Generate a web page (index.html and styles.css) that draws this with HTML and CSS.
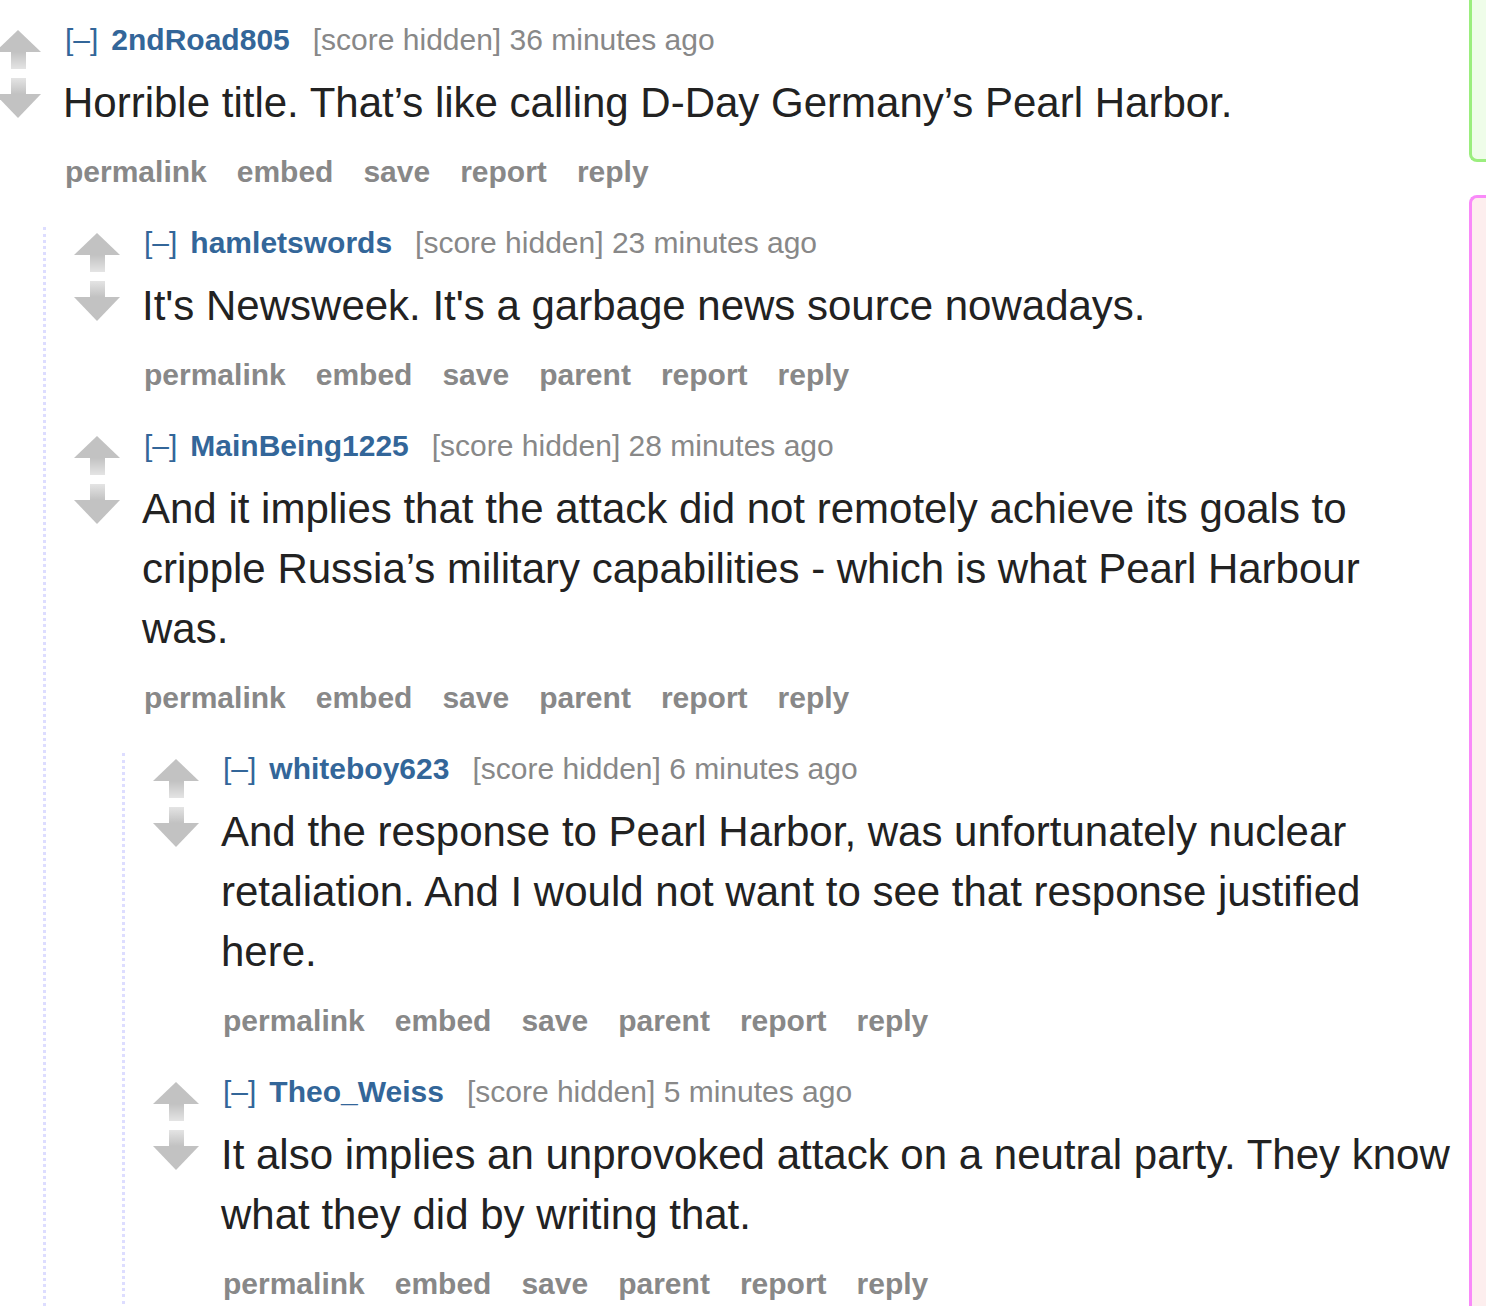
FILE: index.html
```html
<!DOCTYPE html>
<html lang="en">
<head>
    <meta charset="UTF-8">
    <meta name="viewport" content="width=device-width, initial-scale=1.0">
    <title>Comments</title>
    <link rel="stylesheet" href="styles.css">
</head>
<body>

<div class="page">
    <div class="content">

        <div class="comment">
            <div class="row">
                <div class="midcol"><div class="arrow up"></div><div class="arrow down"></div></div>
                <div class="entry">
                    <p class="tagline"><a class="expand">[–]</a><a class="author">2ndRoad805</a><span class="score">[score hidden] 36 minutes ago</span></p>
                    <div class="md"><p>Horrible title. That’s like calling D-Day Germany’s Pearl Harbor.</p></div>
                    <ul class="buttons"><li>permalink</li><li>embed</li><li>save</li><li>report</li><li>reply</li></ul>
                </div>
            </div>

            <div class="child">
                <div class="comment">
                    <div class="row">
                        <div class="midcol"><div class="arrow up"></div><div class="arrow down"></div></div>
                        <div class="entry">
                            <p class="tagline"><a class="expand">[–]</a><a class="author">hamletswords</a><span class="score">[score hidden] 23 minutes ago</span></p>
                            <div class="md"><p>It's Newsweek. It's a garbage news source nowadays.</p></div>
                            <ul class="buttons"><li>permalink</li><li>embed</li><li>save</li><li>parent</li><li>report</li><li>reply</li></ul>
                        </div>
                    </div>
                </div>

                <div class="comment">
                    <div class="row">
                        <div class="midcol"><div class="arrow up"></div><div class="arrow down"></div></div>
                        <div class="entry">
                            <p class="tagline"><a class="expand">[–]</a><a class="author">MainBeing1225</a><span class="score">[score hidden] 28 minutes ago</span></p>
                            <div class="md"><p>And it implies that the attack did not remotely achieve its goals to cripple Russia’s military capabilities - which is what Pearl Harbour was.</p></div>
                            <ul class="buttons"><li>permalink</li><li>embed</li><li>save</li><li>parent</li><li>report</li><li>reply</li></ul>
                        </div>
                    </div>

                    <div class="child">
                        <div class="comment">
                            <div class="row">
                                <div class="midcol"><div class="arrow up"></div><div class="arrow down"></div></div>
                                <div class="entry">
                                    <p class="tagline"><a class="expand">[–]</a><a class="author">whiteboy623</a><span class="score">[score hidden] 6 minutes ago</span></p>
                                    <div class="md"><p>And the response to Pearl Harbor, was unfortunately nuclear retaliation. And I would not want to see that response justified here.</p></div>
                                    <ul class="buttons"><li>permalink</li><li>embed</li><li>save</li><li>parent</li><li>report</li><li>reply</li></ul>
                                </div>
                            </div>
                        </div>

                        <div class="comment">
                            <div class="row">
                                <div class="midcol"><div class="arrow up"></div><div class="arrow down"></div></div>
                                <div class="entry">
                                    <p class="tagline"><a class="expand">[–]</a><a class="author">Theo_Weiss</a><span class="score">[score hidden] 5 minutes ago</span></p>
                                    <div class="md"><p>It also implies an unprovoked attack on a neutral party. They know what they did by writing that.</p></div>
                                    <ul class="buttons"><li>permalink</li><li>embed</li><li>save</li><li>parent</li><li>report</li><li>reply</li></ul>
                                </div>
                            </div>
                        </div>
                    </div>
                </div>
            </div>
        </div>

    </div>

    <div class="side">
        <div class="box green"></div>
        <div class="box pink"></div>
    </div>
</div>

</body>
</html>
```

FILE: styles.css
```css
html, body { overflow: hidden; }
body { margin: 0; font-family: "Liberation Sans", Arial, sans-serif; background: #fff; color: #222; }

.page { display: flex; align-items: flex-start; }
.content { width: 1460px; flex: none; margin-left: -5px; padding-top: 24px; }
.side { width: 17px; flex: none; margin-left: 14px; }

.box { border: 3px solid; border-right: none; }
.box.green { height: 159px; border-top: none; border-radius: 0 0 0 8px; border-color: #9bee7e; background: #effde9; }
.box.pink { margin-top: 33px; height: 1108px; border-bottom: none; border-radius: 8px 0 0 0; border-color: #f98af9; background: #fdeeee; }

.comment + .comment { margin-top: 37px; }
.row { display: flex; }
.midcol { width: 46px; flex: none; padding-top: 5px; }
.entry { flex: 1; margin-left: 22px; min-width: 0; }

.child { margin: 37px 0 0 48px; padding-left: 28px; border-left: 3px dotted #ddf; padding-bottom: 2px; }

.arrow { width: 46px; height: 42px; position: relative; }
.arrow.down { margin-top: 6px; }
.arrow::before, .arrow::after { content: ""; position: absolute; }
.arrow.up::before { left: 0; top: 1px; border-left: 23px solid transparent; border-right: 23px solid transparent; border-bottom: 22px solid #c2c2c2; }
.arrow.up::after { left: 16px; top: 23px; width: 15px; height: 17px; background: linear-gradient(#c2c2c2, #e4e4e4); }
.arrow.down::before { left: 16px; top: 1px; width: 15px; height: 16px; background: linear-gradient(#e4e4e4, #c2c2c2); }
.arrow.down::after { left: 0; top: 17px; border-left: 23px solid transparent; border-right: 23px solid transparent; border-top: 24px solid #c2c2c2; }

.tagline { margin: 0; padding-left: 2px; font-size: 30px; line-height: 32px; color: #888; white-space: nowrap; }
.expand { color: #369; margin-right: 13px; }
.author { color: #369; font-weight: bold; margin-right: 23px; }

.md { margin-top: 17px; font-size: 42px; line-height: 60px; color: #222; }
.md p { margin: 0; }

.buttons { list-style: none; margin: 21px 0 0; padding: 0 0 0 2px; display: flex; gap: 30px; font-size: 30px; line-height: 36px; font-weight: bold; color: #888; }
```
